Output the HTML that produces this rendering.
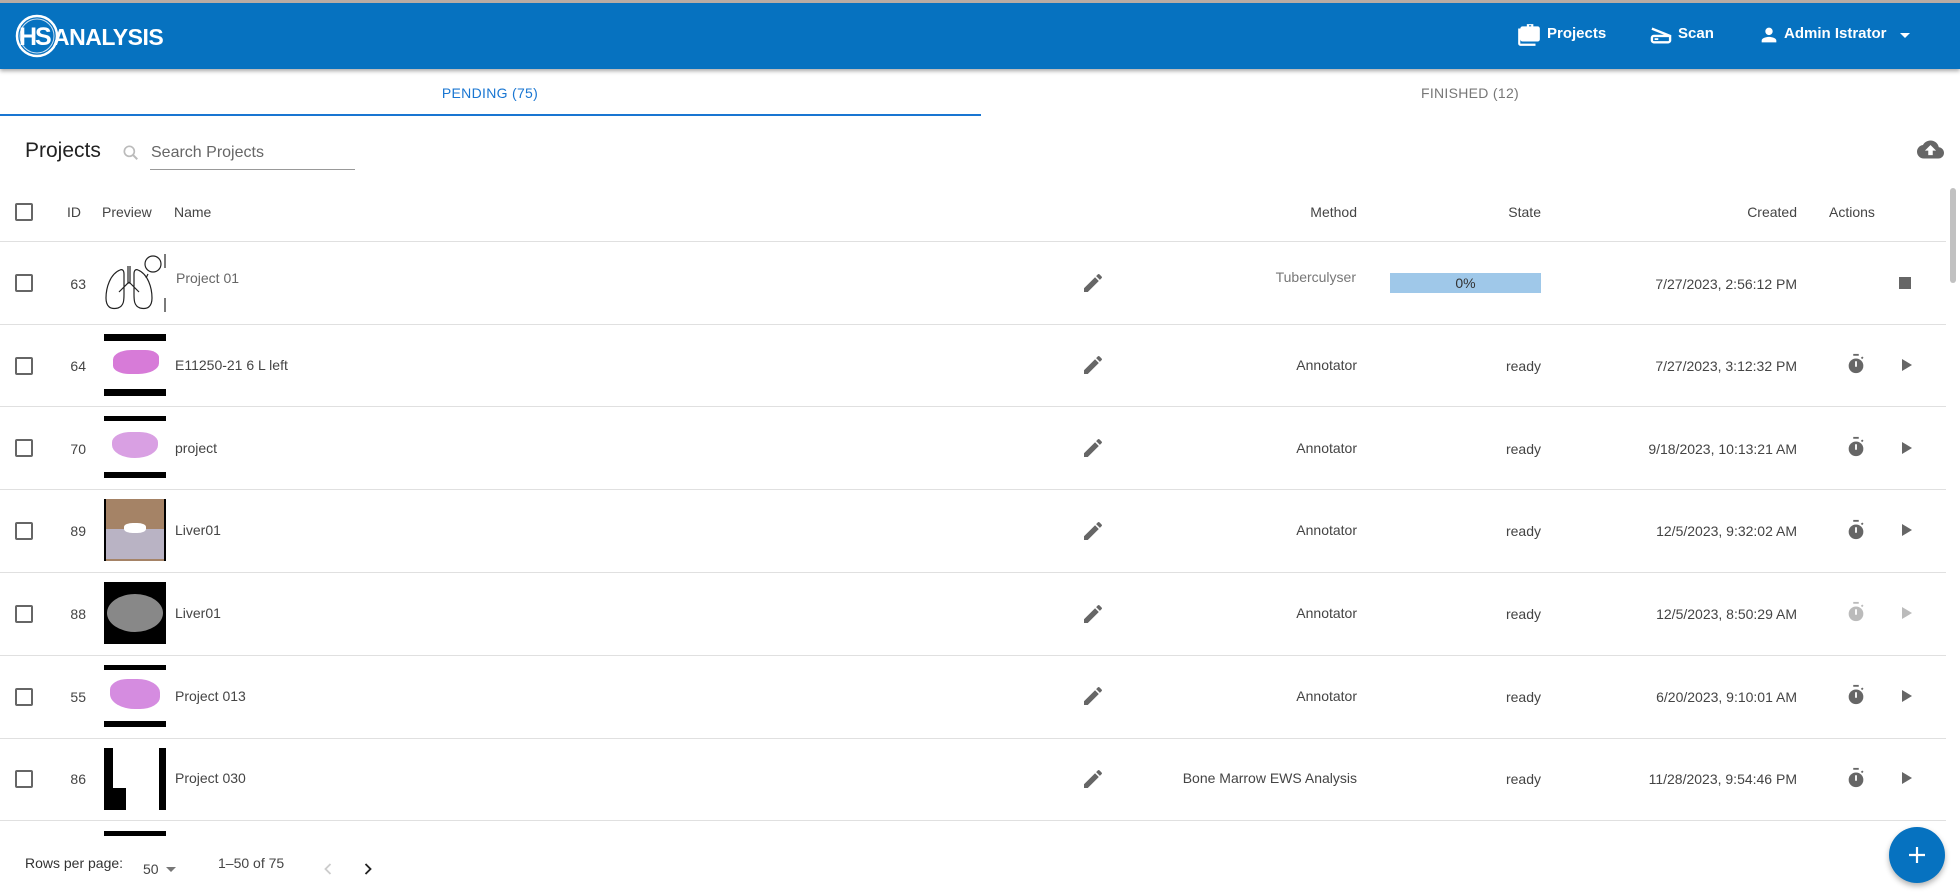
<!DOCTYPE html>
<html><head><meta charset="utf-8"><style>
*{box-sizing:border-box;margin:0;padding:0}
body{width:1960px;height:896px;overflow:hidden;background:#fff;font-family:"Liberation Sans",Arial,sans-serif;color:#333;position:relative}
.a{position:absolute}
.hdr{left:0;top:0;width:1960px;height:69px;background:#0672c0;border-top:3px solid #b8aca4;box-shadow:0 2px 4px rgba(0,0,0,.35)}
.nav{color:#fff;font-weight:bold;font-size:15px;top:25px}
.tab{top:85px;font-size:14px;letter-spacing:.3px;width:980px;text-align:center}
.cb{width:18px;height:18px;border:2px solid #666;border-radius:2px;left:15px}
.th{font-size:14px;color:#444;top:204px}
.line{left:0;width:1946px;height:1px;background:#e0e0e0}
.t{font-size:14px;color:#444}
.r{text-align:right}
.img{left:104px;width:62px;height:62px;overflow:hidden;background:#fff}
</style></head><body>
<div class="a hdr"></div>
<!-- logo -->
<svg class="a" style="left:15px;top:13px" width="160" height="46" viewBox="0 0 160 46">
<circle cx="22" cy="23" r="20" fill="#0672c0" stroke="#fff" stroke-width="2.5"/>
<circle cx="22" cy="23" r="17" fill="none" stroke="#cfe3f5" stroke-width="1"/>
<text x="4" y="32" font-family="Liberation Sans" font-weight="bold" font-size="25" fill="#fff" letter-spacing="-2">HS</text>
<text x="38" y="32" font-family="Liberation Sans" font-weight="bold" font-size="23" fill="#fff" letter-spacing="-0.5">ANALYSIS</text>
</svg>
<!-- nav -->
<svg class="a" style="left:1515px;top:22px" width="28" height="26" viewBox="0 0 24 24"><path fill="#fff" d="M4 6H2v14c0 1.1.9 2 2 2h14v-2H4V6zm16-2h-4V2h-6v2H6c-1.1 0-2 .9-2 2v0h0v10c0 1.1.9 2 2 2h14c1.1 0 2-.9 2-2V6c0-1.1-.9-2-2-2zm-6 0h-2V3h2v1z" transform="translate(0,0)"/></svg>
<div class="a nav" style="left:1547px">Projects</div>
<svg class="a" style="left:1650px;top:25px" width="22" height="20" viewBox="0 0 24 22"><path fill="none" stroke="#fff" stroke-width="2.6" d="M2 4l20 8v5c0 1-1 2-2 2H4c-1 0-2-1-2-2v-3c0-1 1-2 2-2h18"/><rect x="5" y="14.5" width="4" height="2" fill="#fff"/></svg>
<div class="a nav" style="left:1678px">Scan</div>
<svg class="a" style="left:1758px;top:24px" width="22" height="22" viewBox="0 0 24 24"><path fill="#fff" d="M12 12c2.2 0 4-1.8 4-4s-1.8-4-4-4-4 1.8-4 4 1.8 4 4 4zm0 2c-2.7 0-8 1.3-8 4v2h16v-2c0-2.7-5.3-4-8-4z"/></svg>
<div class="a nav" style="left:1784px">Admin Istrator</div>
<div class="a" style="left:1900px;top:33px;width:0;height:0;border-left:5px solid transparent;border-right:5px solid transparent;border-top:5px solid #fff"></div>
<!-- tabs -->
<div class="a tab" style="left:0;color:#1976d2">PENDING (75)</div>
<div class="a tab" style="left:980px;color:#777">FINISHED (12)</div>
<div class="a" style="left:0;top:114px;width:981px;height:2px;background:#1976d2"></div>
<!-- toolbar -->
<div class="a" style="left:25px;top:139px;font-size:21px;color:#222">Projects</div>
<svg class="a" style="left:121px;top:143px" width="20" height="20" viewBox="0 0 24 24"><circle cx="10" cy="10" r="6" fill="none" stroke="#bbb" stroke-width="2"/><path d="M14.5 14.5l5 5" stroke="#bbb" stroke-width="2.4"/></svg>
<div class="a" style="left:151px;top:144px;font-size:16px;color:#666">Search Projects</div>
<div class="a" style="left:150px;top:169px;width:205px;height:1px;background:#999"></div>
<svg class="a" style="left:1917px;top:139px" width="27" height="22" viewBox="0 0 24 18"><path fill="#666" d="M19.4 6.5C18.7 3 15.7.5 12 .5 9.1.5 6.6 2.1 5.3 4.5 2.3 4.9 0 7.4 0 10.5 0 13.8 2.7 16.5 6 16.5h13c2.8 0 5-2.2 5-5 0-2.6-2.1-4.8-4.6-5zM14 9.5v4h-4v-4H7l5-5 5 5h-3z"/></svg>
<!-- header row -->
<div class="a cb" style="top:203px"></div>
<div class="a th" style="left:67px">ID</div>
<div class="a th" style="left:102px">Preview</div>
<div class="a th" style="left:174px">Name</div>
<div class="a th r" style="left:1200px;width:157px">Method</div>
<div class="a th r" style="left:1400px;width:141px">State</div>
<div class="a th r" style="left:1600px;width:197px">Created</div>
<div class="a th" style="left:1829px">Actions</div>
<div class="a line" style="top:241px"></div>
<!-- scrollbar -->
<div class="a" style="left:1950px;top:188px;width:6px;height:95px;background:#c1c1c1;border-radius:3px"></div>

<!-- rows: centers 282,365,447,530,613,696,779 -->
<div class="a line" style="top:324px"></div>
<div class="a line" style="top:406px"></div>
<div class="a line" style="top:489px"></div>
<div class="a line" style="top:572px"></div>
<div class="a line" style="top:655px"></div>
<div class="a line" style="top:738px"></div>
<div class="a line" style="top:820px"></div>

<!-- row 1 -->
<div class="a cb" style="top:274px"></div>
<div class="a t r" style="left:50px;width:36px;top:276px">63</div>
<svg class="a" style="left:100px;top:252px" width="68" height="62" viewBox="0 0 68 62"><g fill="none" stroke="#222" stroke-width="1.2"><path d="M28 14v18M30 14v18M29 30l-10 10M29 30l10 10M20 18c-10 4-14 18-14 28 0 8 4 12 12 10 6-2 6-8 6-14V22c0-4-2-5-4-4zM38 18c10 4 14 18 14 28 0 8-4 12-12 10-6-2-6-8-6-14V22c0-4 2-5 4-4z"/><circle cx="53" cy="12" r="8"/><path d="M48 22l-2 4"/></g><path d="M65 2v14M65 46v14" stroke="#222" stroke-width="1.2"/></svg>
<div class="a t" style="left:176px;top:270px;color:#666">Project 01</div>
<!-- rows 2-7 previews -->
<div class="a img" style="top:334px"><div class="a" style="left:0;top:0;width:62px;height:7px;background:#000"></div><div class="a" style="left:9px;top:16px;width:46px;height:24px;background:#d77bd8;border-radius:40% 30% 45% 35%"></div><div class="a" style="left:0;top:55px;width:62px;height:7px;background:#000"></div></div>
<div class="a img" style="top:416px"><div class="a" style="left:0;top:0;width:62px;height:5px;background:#000"></div><div class="a" style="left:8px;top:16px;width:46px;height:26px;background:#d9a0e3;border-radius:40% 40% 50% 50%"></div><div class="a" style="left:0;top:56px;width:62px;height:6px;background:#000"></div></div>
<div class="a img" style="top:499px;background:#a58366;border-left:2px solid #000;border-right:2px solid #000"><div class="a" style="left:0;top:30px;width:58px;height:30px;background:#b9b3c4"></div><div class="a" style="left:18px;top:24px;width:22px;height:10px;background:#fff;border-radius:40%"></div></div>
<div class="a img" style="top:582px;background:#000"><div class="a" style="left:3px;top:12px;width:56px;height:38px;background:#888;border-radius:50%"></div></div>
<div class="a img" style="top:665px"><div class="a" style="left:0;top:0;width:62px;height:5px;background:#000"></div><div class="a" style="left:6px;top:14px;width:50px;height:30px;background:#d58ce0;border-radius:35% 45% 40% 50%"></div><div class="a" style="left:0;top:56px;width:62px;height:6px;background:#000"></div></div>
<div class="a img" style="top:748px"><div class="a" style="left:0;top:0;width:9px;height:62px;background:#000"></div><div class="a" style="left:0;top:40px;width:22px;height:22px;background:#000"></div><div class="a" style="left:55px;top:0;width:7px;height:62px;background:#000"></div></div>
<div class="a img" style="top:831px;height:8px"><div class="a" style="left:0;top:0;width:62px;height:5px;background:#000"></div></div>

<div class="a cb" style="top:357px"></div><div class="a t r" style="left:50px;width:36px;top:358px">64</div><div class="a t" style="left:175px;top:357px">E11250-21 6 L left</div>
<div class="a cb" style="top:439px"></div><div class="a t r" style="left:50px;width:36px;top:441px">70</div><div class="a t" style="left:175px;top:440px">project</div>
<div class="a cb" style="top:522px"></div><div class="a t r" style="left:50px;width:36px;top:523px">89</div><div class="a t" style="left:175px;top:522px">Liver01</div>
<div class="a cb" style="top:605px"></div><div class="a t r" style="left:50px;width:36px;top:606px">88</div><div class="a t" style="left:175px;top:605px">Liver01</div>
<div class="a cb" style="top:688px"></div><div class="a t r" style="left:50px;width:36px;top:689px">55</div><div class="a t" style="left:175px;top:688px">Project 013</div>
<div class="a cb" style="top:770px"></div><div class="a t r" style="left:50px;width:36px;top:771px">86</div><div class="a t" style="left:175px;top:770px">Project 030</div>

<!-- edit icons -->
<svg width="0" height="0" style="position:absolute"><defs><path id="ed" fill="#666" d="M3 17.25V21h3.75L17.81 9.94l-3.75-3.75L3 17.25zM20.71 7.04a1 1 0 000-1.41l-2.34-2.34a1 1 0 00-1.41 0l-1.83 1.83 3.75 3.75 1.83-1.83z"/><g id="tm"><rect x="9" y="1" width="6" height="2" fill="currentColor"/><circle cx="12" cy="14" r="8" fill="currentColor"/><path d="M18 6l1.5-1.5" stroke="currentColor" stroke-width="2"/><rect x="11" y="9" width="2" height="6" fill="#fff"/></g></defs></svg>
<svg class="a" style="left:1081px;top:271px" width="24" height="24" viewBox="0 0 24 24"><use href="#ed"/></svg>
<svg class="a" style="left:1081px;top:353px" width="24" height="24" viewBox="0 0 24 24"><use href="#ed"/></svg>
<svg class="a" style="left:1081px;top:436px" width="24" height="24" viewBox="0 0 24 24"><use href="#ed"/></svg>
<svg class="a" style="left:1081px;top:519px" width="24" height="24" viewBox="0 0 24 24"><use href="#ed"/></svg>
<svg class="a" style="left:1081px;top:602px" width="24" height="24" viewBox="0 0 24 24"><use href="#ed"/></svg>
<svg class="a" style="left:1081px;top:684px" width="24" height="24" viewBox="0 0 24 24"><use href="#ed"/></svg>
<svg class="a" style="left:1081px;top:767px" width="24" height="24" viewBox="0 0 24 24"><use href="#ed"/></svg>

<!-- method -->
<div class="a t r" style="left:1100px;width:256px;top:269px;color:#777">Tuberculyser</div>
<div class="a t r" style="left:1100px;width:257px;top:357px">Annotator</div>
<div class="a t r" style="left:1100px;width:257px;top:440px">Annotator</div>
<div class="a t r" style="left:1100px;width:257px;top:522px">Annotator</div>
<div class="a t r" style="left:1100px;width:257px;top:605px">Annotator</div>
<div class="a t r" style="left:1100px;width:257px;top:688px">Annotator</div>
<div class="a t r" style="left:1100px;width:257px;top:770px">Bone Marrow EWS Analysis</div>
<!-- state -->
<div class="a t" style="left:1390px;top:273px;width:151px;height:20px;background:#9fc8e9;text-align:center;line-height:20px;color:#333">0%</div>
<div class="a t r" style="left:1450px;width:91px;top:358px">ready</div>
<div class="a t r" style="left:1450px;width:91px;top:441px">ready</div>
<div class="a t r" style="left:1450px;width:91px;top:523px">ready</div>
<div class="a t r" style="left:1450px;width:91px;top:606px">ready</div>
<div class="a t r" style="left:1450px;width:91px;top:689px">ready</div>
<div class="a t r" style="left:1450px;width:91px;top:771px">ready</div>
<!-- created -->
<div class="a t r" style="left:1560px;width:237px;top:276px">7/27/2023, 2:56:12 PM</div>
<div class="a t r" style="left:1560px;width:237px;top:358px">7/27/2023, 3:12:32 PM</div>
<div class="a t r" style="left:1560px;width:237px;top:441px">9/18/2023, 10:13:21 AM</div>
<div class="a t r" style="left:1560px;width:237px;top:523px">12/5/2023, 9:32:02 AM</div>
<div class="a t r" style="left:1560px;width:237px;top:606px">12/5/2023, 8:50:29 AM</div>
<div class="a t r" style="left:1560px;width:237px;top:689px">6/20/2023, 9:10:01 AM</div>
<div class="a t r" style="left:1560px;width:237px;top:771px">11/28/2023, 9:54:46 PM</div>
<!-- actions -->
<div class="a" style="left:1899px;top:277px;width:12px;height:12px;background:#666"></div>
<svg class="a" style="left:1845px;top:353px;color:#666" width="22" height="22" viewBox="0 0 24 24"><use href="#tm"/></svg>
<svg class="a" style="left:1845px;top:436px;color:#666" width="22" height="22" viewBox="0 0 24 24"><use href="#tm"/></svg>
<svg class="a" style="left:1845px;top:519px;color:#666" width="22" height="22" viewBox="0 0 24 24"><use href="#tm"/></svg>
<svg class="a" style="left:1845px;top:601px;color:#bbb" width="22" height="22" viewBox="0 0 24 24"><use href="#tm"/></svg>
<svg class="a" style="left:1845px;top:684px;color:#666" width="22" height="22" viewBox="0 0 24 24"><use href="#tm"/></svg>
<svg class="a" style="left:1845px;top:767px;color:#666" width="22" height="22" viewBox="0 0 24 24"><use href="#tm"/></svg>
<div class="a" style="left:1902px;top:359px;border-left:10px solid #666;border-top:6px solid transparent;border-bottom:6px solid transparent"></div>
<div class="a" style="left:1902px;top:442px;border-left:10px solid #666;border-top:6px solid transparent;border-bottom:6px solid transparent"></div>
<div class="a" style="left:1902px;top:524px;border-left:10px solid #666;border-top:6px solid transparent;border-bottom:6px solid transparent"></div>
<div class="a" style="left:1902px;top:607px;border-left:10px solid #bbb;border-top:6px solid transparent;border-bottom:6px solid transparent"></div>
<div class="a" style="left:1902px;top:690px;border-left:10px solid #666;border-top:6px solid transparent;border-bottom:6px solid transparent"></div>
<div class="a" style="left:1902px;top:772px;border-left:10px solid #666;border-top:6px solid transparent;border-bottom:6px solid transparent"></div>

<!-- footer -->
<div class="a" style="left:0;top:839px;width:1960px;height:57px;background:#fff"></div>
<div class="a t" style="left:25px;top:855px;font-size:14px;color:#333">Rows per page:</div>
<div class="a t" style="left:143px;top:861px">50</div>
<div class="a" style="left:166px;top:867px;border-left:5px solid transparent;border-right:5px solid transparent;border-top:5px solid #777"></div>
<div class="a t" style="left:218px;top:855px">1–50 of 75</div>
<svg class="a" style="left:318px;top:859px" width="20" height="20" viewBox="0 0 24 24"><path d="M15 6l-6 6 6 6" fill="none" stroke="#ccc" stroke-width="2.2"/></svg>
<svg class="a" style="left:358px;top:859px" width="20" height="20" viewBox="0 0 24 24"><path d="M9 6l6 6-6 6" fill="none" stroke="#222" stroke-width="2.2"/></svg>
<div class="a" style="left:1889px;top:827px;width:56px;height:56px;border-radius:50%;background:#0672c0;box-shadow:0 3px 6px rgba(0,0,0,.3)"></div>
<svg class="a" style="left:1905px;top:843px" width="24" height="24" viewBox="0 0 24 24"><path d="M12 4v16M4 12h16" stroke="#fff" stroke-width="2.2"/></svg>
</body></html>
